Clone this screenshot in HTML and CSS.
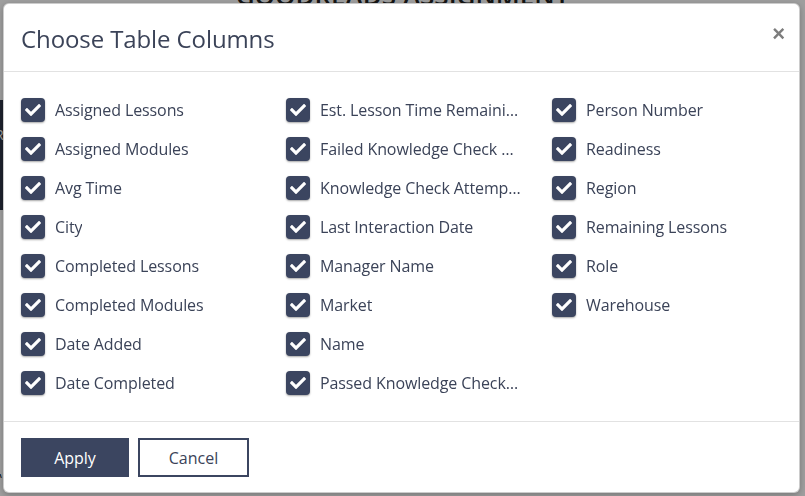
FILE: index.html
```html
<!DOCTYPE html>
<html lang="en">
<head>
    <meta charset="UTF-8">
    <meta name="viewport" content="width=device-width, initial-scale=1.0">
    <title>Goodreads Assignment</title>
    <link rel="stylesheet" href="styles.css">
</head>
<body>

    <!-- page behind the dialog -->
    <div class="page">
        <h1 class="page-title">GOODREADS ASSIGNMENT</h1>
        <div class="side-card">Ro<br>c</div>
        <p class="page-note">W the learners that were provided, in this assignment</p>
    </div>

    <div class="backdrop"></div>

    <div class="modal">
        <div class="modal-header">
            <h2>Choose Table Columns</h2>
            <button class="close" type="button">&times;</button>
        </div>

        <div class="modal-body">
            <label class="col-option"><span class="check"><svg viewBox="0 0 512 512"><path d="M173.9 439.4L7.5 273c-10-10-10-26.2 0-36.2l36.2-36.2c10-10 26.2-10 36.2 0L192 312.7 432.1 72.6c10-10 26.2-10 36.2 0l36.2 36.2c10 10 10 26.2 0 36.2L210.1 439.4c-10 10-26.2 10-36.2 0z"/></svg></span><span class="name">Assigned Lessons</span></label>
            <label class="col-option"><span class="check"><svg viewBox="0 0 512 512"><path d="M173.9 439.4L7.5 273c-10-10-10-26.2 0-36.2l36.2-36.2c10-10 26.2-10 36.2 0L192 312.7 432.1 72.6c10-10 26.2-10 36.2 0l36.2 36.2c10 10 10 26.2 0 36.2L210.1 439.4c-10 10-26.2 10-36.2 0z"/></svg></span><span class="name">Assigned Modules</span></label>
            <label class="col-option"><span class="check"><svg viewBox="0 0 512 512"><path d="M173.9 439.4L7.5 273c-10-10-10-26.2 0-36.2l36.2-36.2c10-10 26.2-10 36.2 0L192 312.7 432.1 72.6c10-10 26.2-10 36.2 0l36.2 36.2c10 10 10 26.2 0 36.2L210.1 439.4c-10 10-26.2 10-36.2 0z"/></svg></span><span class="name">Avg Time</span></label>
            <label class="col-option"><span class="check"><svg viewBox="0 0 512 512"><path d="M173.9 439.4L7.5 273c-10-10-10-26.2 0-36.2l36.2-36.2c10-10 26.2-10 36.2 0L192 312.7 432.1 72.6c10-10 26.2-10 36.2 0l36.2 36.2c10 10 10 26.2 0 36.2L210.1 439.4c-10 10-26.2 10-36.2 0z"/></svg></span><span class="name">City</span></label>
            <label class="col-option"><span class="check"><svg viewBox="0 0 512 512"><path d="M173.9 439.4L7.5 273c-10-10-10-26.2 0-36.2l36.2-36.2c10-10 26.2-10 36.2 0L192 312.7 432.1 72.6c10-10 26.2-10 36.2 0l36.2 36.2c10 10 10 26.2 0 36.2L210.1 439.4c-10 10-26.2 10-36.2 0z"/></svg></span><span class="name">Completed Lessons</span></label>
            <label class="col-option"><span class="check"><svg viewBox="0 0 512 512"><path d="M173.9 439.4L7.5 273c-10-10-10-26.2 0-36.2l36.2-36.2c10-10 26.2-10 36.2 0L192 312.7 432.1 72.6c10-10 26.2-10 36.2 0l36.2 36.2c10 10 10 26.2 0 36.2L210.1 439.4c-10 10-26.2 10-36.2 0z"/></svg></span><span class="name">Completed Modules</span></label>
            <label class="col-option"><span class="check"><svg viewBox="0 0 512 512"><path d="M173.9 439.4L7.5 273c-10-10-10-26.2 0-36.2l36.2-36.2c10-10 26.2-10 36.2 0L192 312.7 432.1 72.6c10-10 26.2-10 36.2 0l36.2 36.2c10 10 10 26.2 0 36.2L210.1 439.4c-10 10-26.2 10-36.2 0z"/></svg></span><span class="name">Date Added</span></label>
            <label class="col-option"><span class="check"><svg viewBox="0 0 512 512"><path d="M173.9 439.4L7.5 273c-10-10-10-26.2 0-36.2l36.2-36.2c10-10 26.2-10 36.2 0L192 312.7 432.1 72.6c10-10 26.2-10 36.2 0l36.2 36.2c10 10 10 26.2 0 36.2L210.1 439.4c-10 10-26.2 10-36.2 0z"/></svg></span><span class="name">Date Completed</span></label>

            <label class="col-option"><span class="check"><svg viewBox="0 0 512 512"><path d="M173.9 439.4L7.5 273c-10-10-10-26.2 0-36.2l36.2-36.2c10-10 26.2-10 36.2 0L192 312.7 432.1 72.6c10-10 26.2-10 36.2 0l36.2 36.2c10 10 10 26.2 0 36.2L210.1 439.4c-10 10-26.2 10-36.2 0z"/></svg></span><span class="name">Est. Lesson Time Remaining</span></label>
            <label class="col-option"><span class="check"><svg viewBox="0 0 512 512"><path d="M173.9 439.4L7.5 273c-10-10-10-26.2 0-36.2l36.2-36.2c10-10 26.2-10 36.2 0L192 312.7 432.1 72.6c10-10 26.2-10 36.2 0l36.2 36.2c10 10 10 26.2 0 36.2L210.1 439.4c-10 10-26.2 10-36.2 0z"/></svg></span><span class="name">Failed Knowledge Check Attempts</span></label>
            <label class="col-option"><span class="check"><svg viewBox="0 0 512 512"><path d="M173.9 439.4L7.5 273c-10-10-10-26.2 0-36.2l36.2-36.2c10-10 26.2-10 36.2 0L192 312.7 432.1 72.6c10-10 26.2-10 36.2 0l36.2 36.2c10 10 10 26.2 0 36.2L210.1 439.4c-10 10-26.2 10-36.2 0z"/></svg></span><span class="name">Knowledge Check Attempts</span></label>
            <label class="col-option"><span class="check"><svg viewBox="0 0 512 512"><path d="M173.9 439.4L7.5 273c-10-10-10-26.2 0-36.2l36.2-36.2c10-10 26.2-10 36.2 0L192 312.7 432.1 72.6c10-10 26.2-10 36.2 0l36.2 36.2c10 10 10 26.2 0 36.2L210.1 439.4c-10 10-26.2 10-36.2 0z"/></svg></span><span class="name">Last Interaction Date</span></label>
            <label class="col-option"><span class="check"><svg viewBox="0 0 512 512"><path d="M173.9 439.4L7.5 273c-10-10-10-26.2 0-36.2l36.2-36.2c10-10 26.2-10 36.2 0L192 312.7 432.1 72.6c10-10 26.2-10 36.2 0l36.2 36.2c10 10 10 26.2 0 36.2L210.1 439.4c-10 10-26.2 10-36.2 0z"/></svg></span><span class="name">Manager Name</span></label>
            <label class="col-option"><span class="check"><svg viewBox="0 0 512 512"><path d="M173.9 439.4L7.5 273c-10-10-10-26.2 0-36.2l36.2-36.2c10-10 26.2-10 36.2 0L192 312.7 432.1 72.6c10-10 26.2-10 36.2 0l36.2 36.2c10 10 10 26.2 0 36.2L210.1 439.4c-10 10-26.2 10-36.2 0z"/></svg></span><span class="name">Market</span></label>
            <label class="col-option"><span class="check"><svg viewBox="0 0 512 512"><path d="M173.9 439.4L7.5 273c-10-10-10-26.2 0-36.2l36.2-36.2c10-10 26.2-10 36.2 0L192 312.7 432.1 72.6c10-10 26.2-10 36.2 0l36.2 36.2c10 10 10 26.2 0 36.2L210.1 439.4c-10 10-26.2 10-36.2 0z"/></svg></span><span class="name">Name</span></label>
            <label class="col-option"><span class="check"><svg viewBox="0 0 512 512"><path d="M173.9 439.4L7.5 273c-10-10-10-26.2 0-36.2l36.2-36.2c10-10 26.2-10 36.2 0L192 312.7 432.1 72.6c10-10 26.2-10 36.2 0l36.2 36.2c10 10 10 26.2 0 36.2L210.1 439.4c-10 10-26.2 10-36.2 0z"/></svg></span><span class="name">Passed Knowledge Check Attempts</span></label>

            <label class="col-option"><span class="check"><svg viewBox="0 0 512 512"><path d="M173.9 439.4L7.5 273c-10-10-10-26.2 0-36.2l36.2-36.2c10-10 26.2-10 36.2 0L192 312.7 432.1 72.6c10-10 26.2-10 36.2 0l36.2 36.2c10 10 10 26.2 0 36.2L210.1 439.4c-10 10-26.2 10-36.2 0z"/></svg></span><span class="name">Person Number</span></label>
            <label class="col-option"><span class="check"><svg viewBox="0 0 512 512"><path d="M173.9 439.4L7.5 273c-10-10-10-26.2 0-36.2l36.2-36.2c10-10 26.2-10 36.2 0L192 312.7 432.1 72.6c10-10 26.2-10 36.2 0l36.2 36.2c10 10 10 26.2 0 36.2L210.1 439.4c-10 10-26.2 10-36.2 0z"/></svg></span><span class="name">Readiness</span></label>
            <label class="col-option"><span class="check"><svg viewBox="0 0 512 512"><path d="M173.9 439.4L7.5 273c-10-10-10-26.2 0-36.2l36.2-36.2c10-10 26.2-10 36.2 0L192 312.7 432.1 72.6c10-10 26.2-10 36.2 0l36.2 36.2c10 10 10 26.2 0 36.2L210.1 439.4c-10 10-26.2 10-36.2 0z"/></svg></span><span class="name">Region</span></label>
            <label class="col-option"><span class="check"><svg viewBox="0 0 512 512"><path d="M173.9 439.4L7.5 273c-10-10-10-26.2 0-36.2l36.2-36.2c10-10 26.2-10 36.2 0L192 312.7 432.1 72.6c10-10 26.2-10 36.2 0l36.2 36.2c10 10 10 26.2 0 36.2L210.1 439.4c-10 10-26.2 10-36.2 0z"/></svg></span><span class="name">Remaining Lessons</span></label>
            <label class="col-option"><span class="check"><svg viewBox="0 0 512 512"><path d="M173.9 439.4L7.5 273c-10-10-10-26.2 0-36.2l36.2-36.2c10-10 26.2-10 36.2 0L192 312.7 432.1 72.6c10-10 26.2-10 36.2 0l36.2 36.2c10 10 10 26.2 0 36.2L210.1 439.4c-10 10-26.2 10-36.2 0z"/></svg></span><span class="name">Role</span></label>
            <label class="col-option"><span class="check"><svg viewBox="0 0 512 512"><path d="M173.9 439.4L7.5 273c-10-10-10-26.2 0-36.2l36.2-36.2c10-10 26.2-10 36.2 0L192 312.7 432.1 72.6c10-10 26.2-10 36.2 0l36.2 36.2c10 10 10 26.2 0 36.2L210.1 439.4c-10 10-26.2 10-36.2 0z"/></svg></span><span class="name">Warehouse</span></label>
        </div>

        <div class="modal-footer">
            <button class="btn btn-primary" type="button">Apply</button>
            <button class="btn btn-outline" type="button">Cancel</button>
        </div>
    </div>

</body>
</html>
```

FILE: styles.css
```css
body {
    margin: 0;
    font-family: "Open Sans", Arial, sans-serif;
    background-color: #fff;
    color: #3b4358;
    overflow: hidden;
}

/* page content sitting under the overlay */
.page {
    position: relative;
    height: 496px;
}

.page-title {
    margin: 0;
    text-align: center;
    font-size: 26px;
    font-weight: 600;
    line-height: 1;
    margin-top: -18px;
    color: #222;
}

.side-card {
    width: 40px;
    height: 110px;
    margin-top: 92px;
    margin-left: -28px;
    background-color: #2e3548;
    color: #fff;
    font-size: 14px;
    line-height: 30px;
    padding-top: 20px;
    box-sizing: border-box;
    text-align: right;
}

.page-note {
    position: absolute;
    left: -6px;
    top: 488px;
    margin: 0;
    font-size: 13px;
    line-height: 16px;
    color: #222;
}

.backdrop {
    position: fixed;
    inset: 0;
    background-color: rgba(0, 0, 0, 0.38);
}

/* dialog */
.modal {
    position: fixed;
    top: 3px;
    left: 3px;
    width: 797px;
    height: 490px;
    box-sizing: border-box;
    background-color: #fff;
    border: 1px solid rgba(0, 0, 0, 0.2);
    border-radius: 6px;
    box-shadow: 0 2px 6px rgba(0, 0, 0, 0.25);
    display: flex;
    flex-direction: column;
}

.modal-header {
    flex: none;
    height: 68px;
    box-sizing: border-box;
    display: flex;
    align-items: center;
    justify-content: space-between;
    padding: 0 14px 0 17px;
    border-bottom: 1px solid #e2e2e2;
}

.modal-header h2 {
    margin: 0;
    font-size: 24px;
    font-weight: 400;
    color: #3b4358;
    letter-spacing: -0.1px;
    margin-top: 2px;
}

.close {
    background: none;
    border: none;
    padding: 0;
    margin-top: -8px;
    font-family: Arial, sans-serif;
    font-size: 22px;
    font-weight: bold;
    color: #7d7d7d;
    cursor: pointer;
}

.modal-body {
    flex: none;
    height: 350px;
    box-sizing: border-box;
    padding: 26px 17px;
    display: grid;
    grid-template-columns: 265px 266px 1fr;
    grid-template-rows: repeat(8, 24px);
    grid-auto-flow: column;
    row-gap: 15px;
    border-bottom: 1px solid #e2e2e2;
}

.col-option {
    display: flex;
    align-items: center;
    gap: 10px;
    font-size: 16px;
    letter-spacing: -0.1px;
    cursor: pointer;
}

.check {
    flex: none;
    width: 24px;
    height: 24px;
    border-radius: 4px;
    background-color: #3b4560;
    box-shadow: 0 1px 2px rgba(0, 0, 0, 0.35);
    display: flex;
    align-items: center;
    justify-content: center;
}

.check svg {
    width: 16px;
    height: 16px;
    fill: #fff;
}

.name {
    max-width: 201px;
    white-space: nowrap;
    overflow: hidden;
    text-overflow: ellipsis;
}

.modal-footer {
    flex: none;
    display: flex;
    gap: 9px;
    padding: 16px 17px 15px;
}

.btn {
    height: 39px;
    font-family: "Open Sans", Arial, sans-serif;
    font-size: 16px;
    cursor: pointer;
}

.btn-primary {
    width: 108px;
    background-color: #3b4560;
    border: none;
    color: #fff;
}

.btn-outline {
    width: 111px;
    background-color: #fff;
    border: 2px solid #3b4560;
    color: #3b4358;
}
```
